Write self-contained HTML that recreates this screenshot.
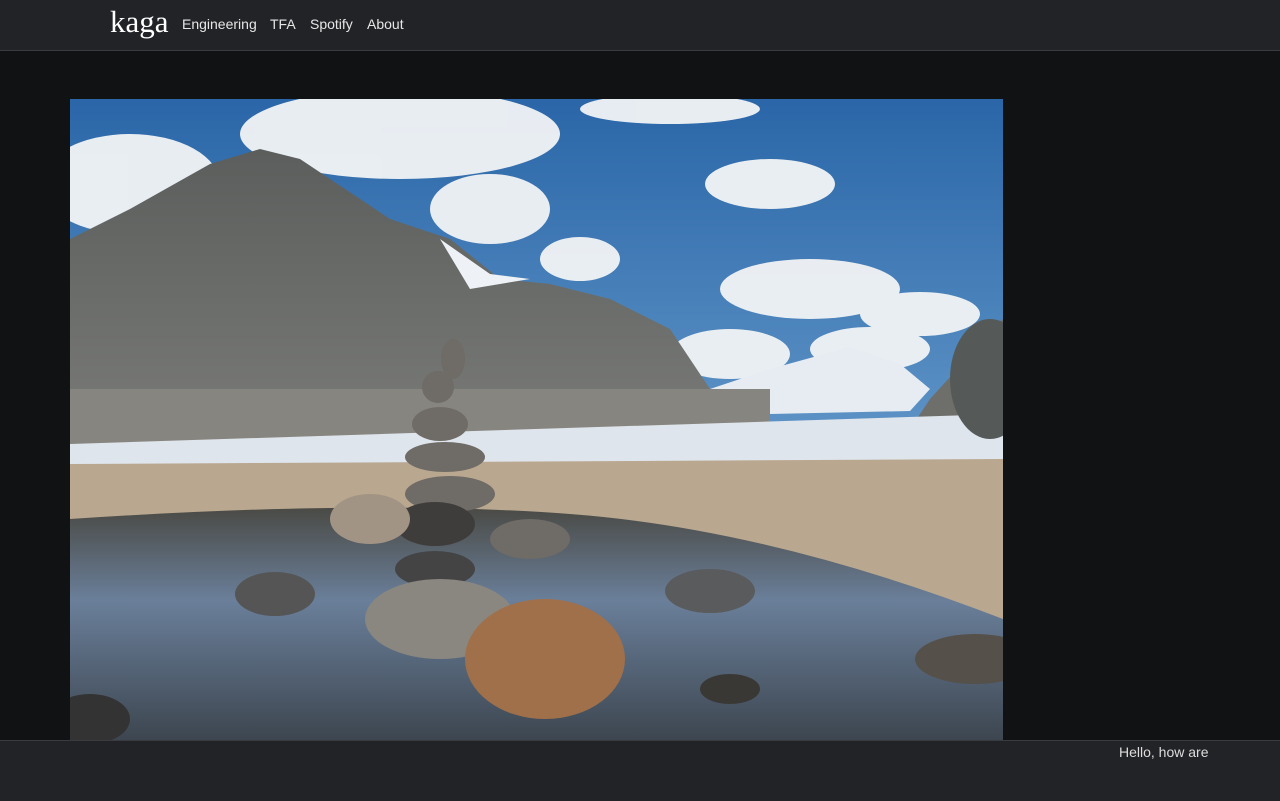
<!DOCTYPE html>
<html><head><meta charset="utf-8"><style>
html,body{margin:0;padding:0;background:#111214;width:1280px;height:800px;overflow:hidden;font-family:"Liberation Sans",sans-serif}
.hdr{position:absolute;left:0;top:0;width:1280px;height:50px;background:#222327;border-bottom:1px solid #3a3b40}
.logo{position:absolute;left:110px;top:4px;font-family:"Liberation Serif",serif;font-size:31px;color:#fff}
.nav{position:absolute;top:16px;font-size:14px;color:#e6e6e6}
.ft{position:absolute;left:0;top:740px;width:1280px;height:60px;background:#222327;border-top:1px solid #3a3b40}
.ft span{position:absolute;left:1119px;top:3px;font-size:14px;color:#ddd}
svg{position:absolute;left:70px;top:99px}
</style></head><body>
<div class="hdr"><div class="logo">kaga</div>
<span class="nav" style="left:182px">Engineering</span>
<span class="nav" style="left:270px">TFA</span>
<span class="nav" style="left:310px">Spotify</span>
<span class="nav" style="left:367px">About</span></div>
<svg width="933" height="641" viewBox="0 0 933 641">
<defs>
<linearGradient id="sky" x1="0" y1="0" x2="0" y2="1"><stop offset="0" stop-color="#2a66a8"/><stop offset="1" stop-color="#8bbbe0"/></linearGradient>
<linearGradient id="pond" x1="0" y1="0" x2="0" y2="1"><stop offset="0" stop-color="#4a4a45"/><stop offset=".4" stop-color="#6a7f9a"/><stop offset="1" stop-color="#3d4650"/></linearGradient>
<linearGradient id="mt" x1="0" y1="0" x2="0" y2="1"><stop offset="0" stop-color="#5b5e5c"/><stop offset="1" stop-color="#7a7b78"/></linearGradient>
</defs>
<rect width="933" height="641" fill="url(#sky)"/>
<g fill="#f2f4f6" opacity=".95">
<ellipse cx="60" cy="85" rx="90" ry="50"/><ellipse cx="330" cy="35" rx="160" ry="45"/><ellipse cx="420" cy="110" rx="60" ry="35"/>
<ellipse cx="700" cy="85" rx="65" ry="25"/><ellipse cx="510" cy="160" rx="40" ry="22"/><ellipse cx="740" cy="190" rx="90" ry="30"/>
<ellipse cx="660" cy="255" rx="60" ry="25"/><ellipse cx="850" cy="215" rx="60" ry="22"/><ellipse cx="800" cy="250" rx="60" ry="22"/>
<ellipse cx="600" cy="10" rx="90" ry="15"/>
</g>
<polygon points="0,140 60,110 140,65 190,50 230,60 320,120 380,140 430,180 480,185 540,200 600,230 660,320 640,345 0,345" fill="url(#mt)"/>
<polygon points="370,140 420,175 460,180 400,190" fill="#eef2f6"/>
<polygon points="640,290 700,270 780,248 830,265 860,290 840,312 700,315" fill="#e6ecf2"/>
<polygon points="860,300 933,220 933,340 840,330" fill="#6e6f6b"/>
<rect x="0" y="290" width="700" height="55" fill="#87857f"/>
<polygon points="0,345 933,315 933,370 0,365" fill="#dfe5ec"/>
<polygon points="0,365 933,360 933,641 0,641" fill="#b9a78f"/>
<path d="M0,420 Q300,400 500,415 Q700,430 933,520 L933,641 L0,641Z" fill="url(#pond)"/>
<g fill="#6f6b66">
<ellipse cx="370" cy="325" rx="28" ry="17"/><ellipse cx="375" cy="358" rx="40" ry="15"/><ellipse cx="380" cy="395" rx="45" ry="18"/>
<ellipse cx="368" cy="288" rx="16" ry="16"/><ellipse cx="383" cy="260" rx="12" ry="20"/>
<ellipse cx="365" cy="425" rx="40" ry="22" fill="#3f3d3b"/><ellipse cx="460" cy="440" rx="40" ry="20"/>
<ellipse cx="300" cy="420" rx="40" ry="25" fill="#a29484"/><ellipse cx="205" cy="495" rx="40" ry="22" fill="#555"/>
<ellipse cx="640" cy="492" rx="45" ry="22" fill="#5a5b5c"/><ellipse cx="365" cy="470" rx="40" ry="18" fill="#444"/>
<ellipse cx="370" cy="520" rx="75" ry="40" fill="#8a8680"/><ellipse cx="475" cy="560" rx="80" ry="60" fill="#a0704a"/>
<ellipse cx="920" cy="280" rx="40" ry="60" fill="#555a58"/><ellipse cx="905" cy="560" rx="60" ry="25" fill="#555049"/>
<ellipse cx="20" cy="620" rx="40" ry="25" fill="#333"/><ellipse cx="660" cy="590" rx="30" ry="15" fill="#3a3835"/>
</g>
</svg>
<div class="ft"><span>Hello, how are</span></div>
</body></html>
